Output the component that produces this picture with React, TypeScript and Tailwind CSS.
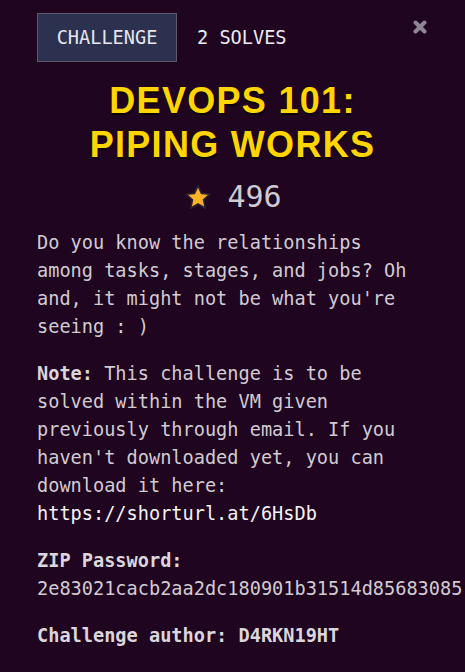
import { useState } from "react";

const mono = { fontFamily: '"DejaVu Sans Mono", "Liberation Mono", monospace' };

const App = () => {
  const [tab] = useState("challenge");

  return (
    <div className="min-h-[672px] w-[465px] overflow-hidden bg-[#1f0520] text-[#d2cbd2]" style={mono}>
      {/* header */}
      <div className="flex items-start pt-[13px] pl-[37px] pr-[38px]">
        <div className="flex h-[49px] w-[140px] items-center justify-center border border-[#5c5a6a] bg-[#2c3150] text-[18.6px] text-[#e6e6ee]">
          {tab === "challenge" ? "CHALLENGE" : ""}
        </div>
        <div className="ml-[20px] flex h-[49px] items-center text-[18.6px] text-[#ececf2]">2 SOLVES</div>
        <button className="ml-auto mt-[7px] text-[#8d8595]">
          <svg width="14" height="14" viewBox="0 0 14 14">
            <path d="M2.5 2.5 L11.5 11.5 M11.5 2.5 L2.5 11.5" stroke="currentColor" strokeWidth="4" strokeLinecap="round" />
          </svg>
        </button>
      </div>

      {/* title */}
      <h1
        className="mt-[17px] text-center text-[36px] font-bold leading-[44px] tracking-[1.3px] text-[#ffd500] [text-shadow:1px_2px_1px_#0a0008]"
        style={{ fontFamily: '"Liberation Sans", Arial, sans-serif' }}
      >
        DEVOPS 101:
        <br />
        PIPING WORKS
      </h1>

      <div className="mt-[12px] flex items-center justify-center gap-[14px]">
        <svg width="30" height="29" viewBox="0 0 24 24">
          <path
            d="M12 2.2 L14.9 8.6 L21.8 9.3 L16.6 14 L18.1 20.9 L12 17.3 L5.9 20.9 L7.4 14 L2.2 9.3 L9.1 8.6 Z"
            fill="#fbb227"
            stroke="#2a2230"
            strokeWidth="1.4"
            strokeLinejoin="round"
          />
        </svg>
        <span className="text-[30px] leading-[36px] text-[#cfcbd3]">496</span>
      </div>

      {/* description */}
      <div className="mt-[14px] px-[37px] text-[18.6px] leading-[28px]">
        <p>
          Do you know the relationships among tasks, stages, and jobs? Oh and, it might not be what you're seeing : )
        </p>
        <p className="mt-[19px]">
          <b className="text-[#dcd6dc]">Note:</b> This challenge is to be solved within the VM given previously through
          email. If you haven't downloaded yet, you can download it here:{" "}
          <a className="text-[#f4f2f6]">https://shorturl.at/6HsDb</a>
        </p>
        <p className="mt-[19px]">
          <b className="text-[#dcd6dc]">ZIP Password:</b>
          <br />
          <span className="whitespace-nowrap">2e83021cacb2aa2dc180901b31514d85683085</span>
        </p>
        <p className="mt-[19px] font-bold text-[#dcd6dc]">Challenge author: D4RKN19HT</p>
      </div>
    </div>
  );
};

export default App;
